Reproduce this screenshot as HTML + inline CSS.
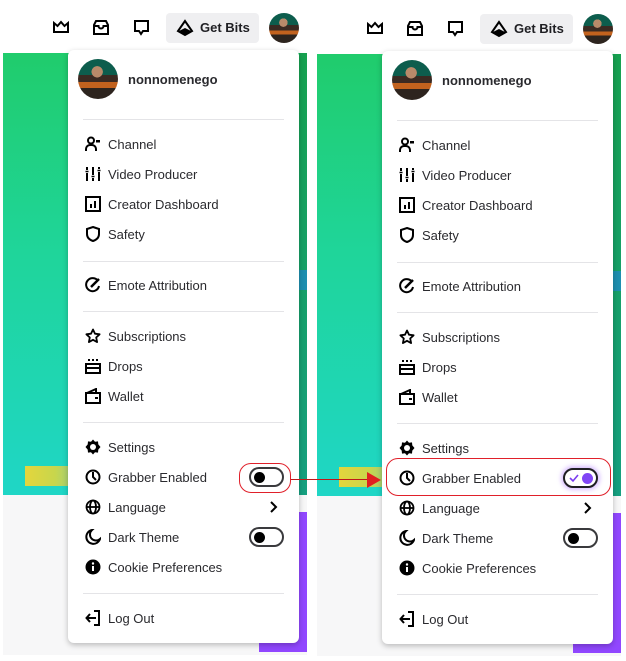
<!DOCTYPE html>
<html><head><meta charset="utf-8"><style>
*{margin:0;padding:0;box-sizing:border-box}
body{width:626px;height:660px;background:#fff;position:relative;overflow:hidden;font-family:"Liberation Sans",sans-serif;color:#1f1f23}
.p{position:absolute;left:0;top:0;width:313px;height:660px}
.abs{position:absolute}
.green{left:3px;top:53px;width:304px;height:442px;background:linear-gradient(180deg,#20cc6c 0%,#1fd59a 45%,#1fd6c6 100%)}
.gray{left:3px;top:495px;width:304px;height:160px;background:#f7f7f8}
.strip{left:299px;top:53px;width:8px;height:442px;background:linear-gradient(180deg,#17a150,#16a080)}
.blue{left:299px;top:270px;width:8px;height:20px;background:#1e8fb0}
.purple{left:259px;top:512px;width:48px;height:140px;background:#9147ff}
.yellow{left:25px;top:466px;width:50px;height:20px;background:linear-gradient(90deg,#e4d63c,#c8d64c 60%,#9dd080)}
.menu{left:68px;top:50px;width:231px;height:593px;background:#fff;border-radius:6px;box-shadow:0 2px 6px rgba(0,0,0,.25)}
.it{position:absolute;left:40px;font-size:13px;line-height:16px;color:#2a2a2e;margin-top:1px}
.ic{position:absolute;left:17px;width:16px;height:16px}
.div{position:absolute;left:15px;width:201px;height:1px;background:#e4e4e7}
.tg{position:absolute;width:35px;height:20px;border:2px solid #3a3a3d;border-radius:10px}
.tg i{position:absolute;left:3px;top:3px;width:11px;height:11px;border-radius:50%;background:#000}
.av{border-radius:50%;background:radial-gradient(circle at 48% 32%,#b98a6a 0 16%,transparent 17%),linear-gradient(180deg,#0d5d4d 0 40%,#3b2a22 40% 58%,#c2621e 58% 72%,#2d241e 72%);overflow:hidden}
</style></head><body>

<div class="p" id="L">
<div class="abs green"></div><div class="abs gray"></div><div class="abs strip"></div><div class="abs blue"></div><div class="abs purple"></div><div class="abs yellow"></div>
<svg class="abs" style="left:52px;top:19px" width="18" height="16" viewBox="0 0 18 16"><path d="M2 4l3.5 3L9 3l3.5 4L16 4v9H2z" fill="none" stroke="#000" stroke-width="2"/></svg>
<svg class="abs" style="left:92px;top:19px" width="18" height="17" viewBox="0 0 18 17"><path d="M2 6l2-4h10l2 4v9H2zM2 7h4.5a2.5 2.5 0 005 0H16" fill="none" stroke="#000" stroke-width="2"/></svg>
<svg class="abs" style="left:133px;top:19px" width="17" height="18" viewBox="0 0 17 18"><path d="M2 2h13v10h-5l-2 3-2-3H2z" fill="none" stroke="#000" stroke-width="2"/></svg>
<div class="abs" style="left:166px;top:13px;width:93px;height:30px;background:#efeff1;border-radius:4px"></div>
<svg class="abs" style="left:176px;top:19px" width="18" height="18" viewBox="0 0 18 18"><path d="M9 2L2 12l7 4 7-4z" fill="none" stroke="#000" stroke-width="2"/><path d="M3 12l6-3 6 3-6 4z" fill="#000"/></svg>
<div class="abs" style="left:200px;top:20px;font-size:13px;font-weight:bold;color:#1f1f23">Get Bits</div>
<div class="abs av" style="left:269px;top:13px;width:30px;height:30px"></div>

<div class="abs menu">
 <div class="abs av" style="left:10px;top:9px;width:40px;height:40px"></div>
 <div class="it" style="left:60px;top:21px;font-weight:bold">nonnomenego</div>
 <div class="div" style="top:69px"></div>
 <svg class="ic" style="top:86px" viewBox="0 0 16 16"><circle cx="6" cy="4.5" r="3" fill="none" stroke="#000" stroke-width="2"/><path d="M1 15v-2a4 4 0 014-4h2a4 4 0 014 4v2" fill="none" stroke="#000" stroke-width="2"/><rect x="11" y="4" width="4" height="2.5" fill="#000"/></svg>
 <div class="it" style="top:86px">Channel</div>
 <svg class="ic" style="top:116px" viewBox="0 0 16 16"><path d="M2 1v3M2 7v8M8 1v8M8 12v3M14 1v2M14 6v9" stroke="#000" stroke-width="2"/><path d="M0.5 5.5h3M6.5 10.5h3M12.5 4.5h3" stroke="#000" stroke-width="1.6"/></svg>
 <div class="it" style="top:116px">Video Producer</div>
 <svg class="ic" style="top:146px" viewBox="0 0 16 16"><rect x="1" y="1" width="14" height="14" fill="none" stroke="#000" stroke-width="2"/><path d="M6 12V8M10 12V5" stroke="#000" stroke-width="2"/></svg>
 <div class="it" style="top:146px">Creator Dashboard</div>
 <svg class="ic" style="top:176px" viewBox="0 0 16 16"><path d="M8 1l6 2v5c0 4-3 6-6 7-3-1-6-3-6-7V3z" fill="none" stroke="#000" stroke-width="2"/></svg>
 <div class="it" style="top:176px">Safety</div>
 <div class="div" style="top:211px"></div>
 <svg class="ic" style="top:227px" viewBox="0 0 16 16"><path d="M13 4A6.5 6.5 0 1014 9" fill="none" stroke="#000" stroke-width="2"/><path d="M6 10l8-8" stroke="#000" stroke-width="2.5"/></svg>
 <div class="it" style="top:227px">Emote Attribution</div>
 <div class="div" style="top:261px"></div>
 <svg class="ic" style="top:278px" viewBox="0 0 16 16"><path d="M8 1.5l2 4.2 4.6.6-3.4 3.2.9 4.6L8 11.8l-4.1 2.3.9-4.6L1.4 6.3 6 5.7z" fill="none" stroke="#000" stroke-width="1.8" stroke-linejoin="round"/></svg>
 <div class="it" style="top:278px">Subscriptions</div>
 <svg class="ic" style="top:308px" viewBox="0 0 16 16"><path d="M4 1v2M8 1v2M12 1v2" stroke="#000" stroke-width="2"/><rect x="1" y="6" width="14" height="9" fill="none" stroke="#000" stroke-width="2"/><path d="M1 10h14" stroke="#000" stroke-width="2"/></svg>
 <div class="it" style="top:308px">Drops</div>
 <svg class="ic" style="top:338px" viewBox="0 0 16 16"><path d="M1 5h14v10H1zM2 5l9-4v4" fill="none" stroke="#000" stroke-width="2"/><rect x="10" y="9" width="3" height="2" fill="#000"/></svg>
 <div class="it" style="top:338px">Wallet</div>
 <div class="div" style="top:372px"></div>
 <svg class="ic" style="top:389px" viewBox="0 0 16 16"><path d="M8 0.5l2 2.2 3 -.3.3 3 2.2 2.6-2.2 2.6-.3 3-3-.3-2 2.2-2-2.2-3 .3-.3-3L0.5 8l2.2-2.6.3-3 3 .3z" fill="#000"/><circle cx="8" cy="8" r="3" fill="#fff"/></svg>
 <div class="it" style="top:389px">Settings</div>
 <svg class="ic" style="top:419px" viewBox="0 0 16 16"><circle cx="8" cy="8" r="6.5" fill="none" stroke="#000" stroke-width="2"/><path d="M8 3v5l3 3" fill="none" stroke="#000" stroke-width="2"/></svg>
 <div class="it" style="top:419px">Grabber Enabled</div>
 <svg class="ic" style="top:449px" viewBox="0 0 16 16"><circle cx="8" cy="8" r="6.5" fill="none" stroke="#000" stroke-width="1.8"/><ellipse cx="8" cy="8" rx="3" ry="6.5" fill="none" stroke="#000" stroke-width="1.8"/><path d="M1.5 8h13" stroke="#000" stroke-width="1.8"/></svg>
 <div class="it" style="top:449px">Language</div>
 <svg class="abs" style="left:200px;top:451px" width="10" height="12" viewBox="0 0 10 12"><path d="M3 1l5 5-5 5" fill="none" stroke="#000" stroke-width="2"/></svg>
 <svg class="ic" style="top:479px" viewBox="0 0 16 16"><path d="M7 1a7 7 0 108 9A6 6 0 017 1z" fill="none" stroke="#000" stroke-width="2"/></svg>
 <div class="it" style="top:479px">Dark Theme</div>
 <div class="tg" style="left:181px;top:477px"><i></i></div>
 <svg class="ic" style="top:509px" viewBox="0 0 16 16"><circle cx="8" cy="8" r="7.5" fill="#000"/><rect x="7" y="7" width="2" height="5" fill="#fff"/><circle cx="8" cy="4.5" r="1.2" fill="#fff"/></svg>
 <div class="it" style="top:509px">Cookie Preferences</div>
 <div class="div" style="top:543px"></div>
 <svg class="ic" style="top:560px" viewBox="0 0 16 16"><path d="M9 1h5v14H9M11 8H2M5 4L1.5 8 5 12" fill="none" stroke="#000" stroke-width="2"/></svg>
 <div class="it" style="top:560px">Log Out</div>
</div>
</div>

<div id="R"></div>

<div class="tg" style="left:249px;top:467px"><i></i></div>
<div class="abs" style="left:239px;top:463px;width:52px;height:30px;border:1px solid #e0202a;border-radius:12px"></div>
<div class="abs" style="left:291px;top:479px;width:78px;height:1px;background:#c01818"></div>
<svg class="abs" style="left:367px;top:472px" width="14" height="16" viewBox="0 0 14 16"><path d="M0 0l14 8-14 8z" fill="#e02020"/></svg>

<script>
var L=document.getElementById('L');var c=L.cloneNode(true);c.id='R2';c.style.left='314px';c.style.top='1px';document.body.insertBefore(c,document.getElementById('R'));
</script>
<div class="abs" style="left:563px;top:468px;width:35px;height:20px;border:2px solid #1f1f23;border-radius:10px;background:#fff;box-shadow:0 0 4px 2px rgba(145,71,255,.35)"><svg style="position:absolute;left:4px;top:4px" width="10" height="9" viewBox="0 0 10 9"><path d="M1 4l3 3 5-6" fill="none" stroke="#7a3cf0" stroke-width="1.6"/></svg><i style="position:absolute;right:3px;top:3px;width:11px;height:11px;border-radius:50%;background:#8045f5"></i></div>
<div class="abs" style="left:386px;top:458px;width:225px;height:38px;border:1px solid #e0202a;border-radius:12px"></div>
</body></html>
